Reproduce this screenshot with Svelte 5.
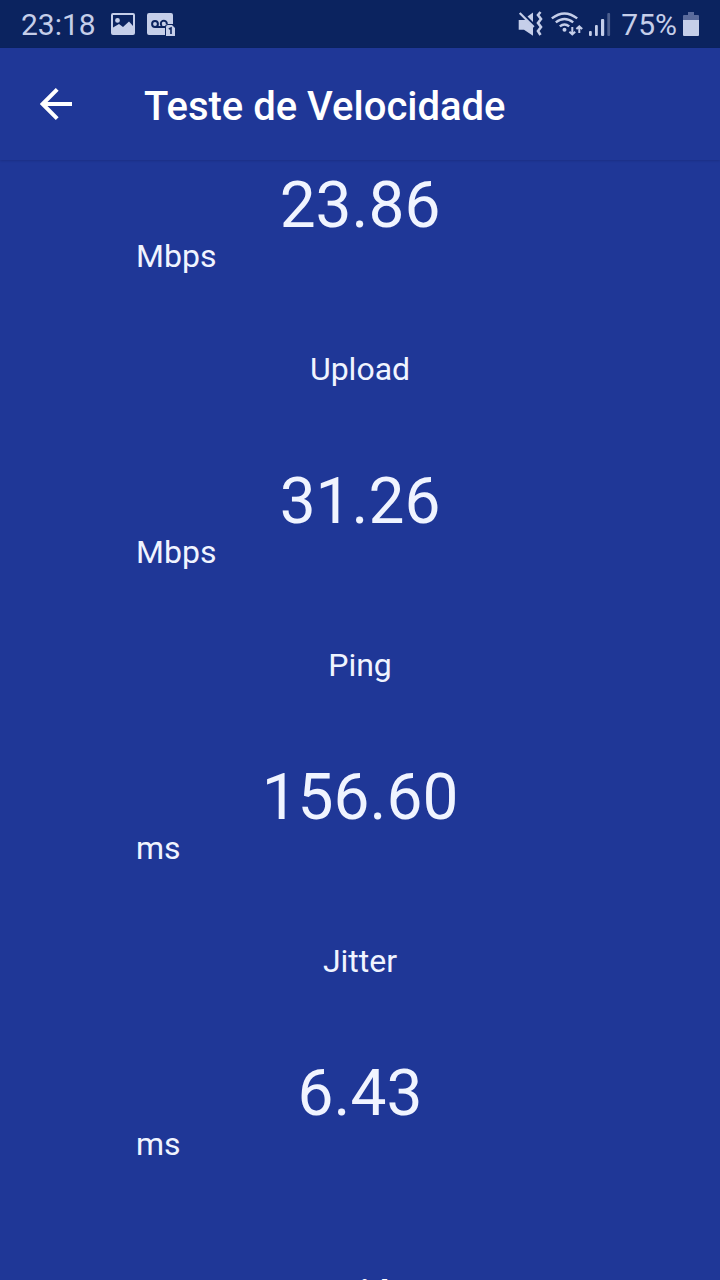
<script>
  const results = [
    { label: "Download", value: "23.86", unit: "Mbps" },
    { label: "Upload", value: "31.26", unit: "Mbps" },
    { label: "Ping", value: "156.60", unit: "ms" },
    { label: "Jitter", value: "6.43", unit: "ms" }
  ];
</script>

<div class="screen">
  <div class="status-bar">
    <span class="clock">23:18</span>
    <svg class="picture" width="24" height="22" viewBox="0 0 24 22">
      <path fill="currentColor" fill-rule="evenodd" d="M2 0H22Q24 0 24 2V20Q24 22 22 22H2Q0 22 0 20V2Q0 0 2 0ZM2 2V14.5L8 11L12 14L18 8.5L22 13V2ZM6.5 5A2.4 2.4 0 1 1 6.5 9.8A2.4 2.4 0 1 1 6.5 5Z" />
    </svg>
    <svg class="voicemail" width="29" height="23" viewBox="0 0 29 23">
      <path fill="currentColor" d="M2 0H24Q26 0 26 2V11H21Q18 11 18 14V22H2Q0 22 0 20V2Q0 0 2 0Z" />
      <g fill="none" stroke="#0b235f" stroke-width="2">
        <circle cx="8" cy="11" r="2.9" />
        <path d="M8 13.9H18M14.9 13A3 3 0 1 1 19.8 11" />
      </g>
      <path fill="currentColor" d="M21 12H25L28 15V23H19V14Q19 12 21 12Z" />
      <path fill="none" stroke="#0b235f" stroke-width="1.6" d="M21.8 16L24 15V21" />
    </svg>

    <div class="status-right">
      <svg class="muted" width="26" height="26" viewBox="0 0 26 26">
        <path fill="currentColor" d="M.7 9H8L15 16V24.7L6 18.7H.7ZM9.5 5.5L15 1.5V11Z" />
        <path fill="none" stroke="currentColor" stroke-width="2.2" d="M1.7 2L15.8 16" />
        <path fill="none" stroke="currentColor" stroke-width="2.6" d="M22.5 1L20 4L23 8L20 12L23 16L20 20L22.5 24" />
      </svg>
      <svg class="wifi" width="32" height="26" viewBox="0 0 32 26">
        <g fill="none" stroke="currentColor" stroke-width="2.4">
          <path d="M.8 7.4Q13.5 -2.6 26.2 7.4M4.8 11.4Q13.5 4.5 22.2 11.4M8.8 15.4Q13.5 11.4 18.2 15.4" />
        </g>
        <circle cx="13.5" cy="18.8" r="2" fill="currentColor" />
        <path fill="none" stroke="currentColor" stroke-width="2" d="M21.3 16V24M18.4 20.8L21.3 23.4L24.2 20.8M28.3 22V15M25.4 18L28.3 15.4L31.2 18" />
      </svg>
      <svg class="signal" width="22" height="24" viewBox="0 0 22 24">
        <g fill="currentColor">
          <rect x="0" y="19" width="2.8" height="5" rx="1" />
          <rect x="6" y="13" width="2.8" height="11" rx="1" />
          <rect x="12" y="7" width="3.2" height="17" rx="1" />
          <rect x="18.3" y="1" width="2.8" height="23" rx="1" opacity="0.35" />
        </g>
      </svg>
      <span class="percent">75%</span>
      <svg class="battery" width="16" height="24" viewBox="0 0 16 24">
        <path fill="#5b6b9c" d="M5 0H11V3H15Q16 3 16 4V8H0V4Q0 3 1 3H5Z" />
        <path fill="currentColor" d="M0 8H16V23Q16 24 15 24H1Q0 24 0 23Z" />
      </svg>
    </div>
  </div>

  <header class="toolbar">
    <button class="back" aria-label="Voltar">
      <svg width="32" height="32" viewBox="0 0 32 32">
        <path fill="none" stroke="currentColor" stroke-width="4" d="M32 16H4M17.2 1.4L2.6 16L17.2 30.6" />
      </svg>
    </button>
    <h1 class="title">Teste de Velocidade</h1>
  </header>

  <main class="results">
    {#each results as result, i}
      <section class="result">
        {#if i > 0}
          <h2 class="label">{result.label}</h2>
        {/if}
        <div class="value">{result.value}</div>
        <div class="unit">{result.unit}</div>
      </section>
    {/each}
    <h2 class="server">Servidor:</h2>
  </main>
</div>

<style>
  :global(body) {
    margin: 0;
    background: #1f3797;
  }

  .screen {
    display: flex;
    flex-direction: column;
    height: 1280px;
    overflow: hidden;
    background: #1f3797;
    color: #f0f4ff;
    font-family: Roboto, sans-serif;
  }

  .status-bar {
    display: flex;
    flex: none;
    align-items: center;
    box-sizing: border-box;
    height: 48px;
    padding: 0 21px;
    background: #0b235f;
    color: #c5cee9;
    font-size: 30px;
  }

  .clock {
    width: 90px;
    line-height: 50px;
    padding-top: 2px;
  }

  .voicemail {
    margin-left: 12px;
  }

  .status-right {
    display: flex;
    align-items: center;
    margin-left: auto;
  }

  .wifi {
    margin-left: 7px;
  }

  .signal {
    margin-left: 6px;
  }

  .percent {
    margin-left: 10px;
    padding-top: 2px;
    line-height: 50px;
  }

  .battery {
    margin-left: 6px;
  }

  .toolbar {
    display: flex;
    flex: none;
    align-items: center;
    box-sizing: border-box;
    height: 112px;
    padding-left: 40px;
    color: #fff;
    box-shadow: 0 1px 2px rgba(0, 0, 30, 0.14);
  }

  .back {
    display: flex;
    padding: 0;
    border: 0;
    background: none;
    color: inherit;
    cursor: pointer;
  }

  .title {
    margin: 6px 0 0 72px;
    font-size: 40px;
    font-weight: 500;
    line-height: 48px;
  }

  .results {
    flex: none;
    padding: 13px 136px 0;
  }

  .result {
    padding-bottom: 75px;
  }

  .label {
    margin: 0 0 81px;
    font-size: 32px;
    font-weight: 400;
    line-height: 38px;
    text-align: center;
  }

  .value {
    margin-bottom: -2px;
    font-size: 64px;
    line-height: 66px;
    text-align: center;
  }

  .unit {
    font-size: 32px;
    line-height: 38px;
  }

  .server {
    margin: 34px 0 0;
    color: #fff;
    font-size: 35px;
    font-weight: 700;
    line-height: 44px;
    text-align: center;
  }
</style>
